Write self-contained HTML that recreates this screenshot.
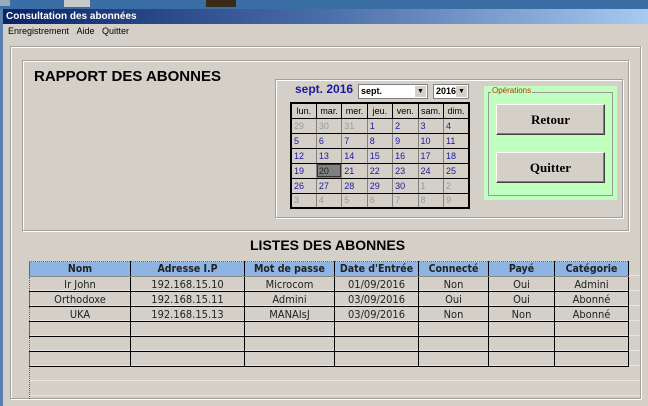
<!DOCTYPE html>
<html><head><meta charset="utf-8"><style>
*{margin:0;padding:0;box-sizing:border-box}
body{width:648px;height:406px;overflow:hidden;background:#d4d0c8;position:relative;font-family:"Liberation Sans",sans-serif}
.a{position:absolute}
.frame{position:absolute;border:1px solid #a0a0a0;box-shadow:inset 1px 1px 0 #fff,1px 1px 0 #fff}
table{border-collapse:collapse;position:absolute}
.cal td{border:1px solid #000;width:25.7px;height:15px;font-size:9px;padding-left:2px;color:#1a1aa0;background:#d4d0c8;border-right-color:#808080;border-bottom-color:#000}
.cal th{border:1px solid #000;height:15px;font-size:9px;font-weight:normal;color:#000;text-align:center}
.cal td.g{color:#999}
.btn{position:absolute;width:109px;height:31px;background:#d4d0c8;border:1px solid;border-color:#fff #404040 #404040 #fff;box-shadow:inset -1px -1px 0 #808080;font-family:"Liberation Serif",serif;font-weight:bold;font-size:13px;text-align:center;line-height:29px}
.t td,.t th{height:15px;font-size:11px;text-align:center;border-right:1px solid #000;border-bottom:1px solid #000;color:#222;font-family:"DejaVu Sans Condensed","Liberation Sans",sans-serif}
.t th{background:#8db4e2;font-weight:bold;border-bottom:1px solid #888;font-size:10.5px}
</style></head><body>
<div class="a" style="left:0;top:0;width:648px;height:9px;background:#3a6ea5"></div>
<div class="a" style="left:0;top:0;width:10px;height:6px;background:#9ab"></div>
<div class="a" style="left:64px;top:0;width:26px;height:7px;background:#c9c9c9"></div>
<div class="a" style="left:206px;top:0;width:30px;height:7px;background:#3a2a1a"></div>
<div class="a" style="left:0;top:9px;width:3px;height:397px;background:#5a80b0"></div>
<div class="a" style="left:3px;top:9px;width:645px;height:15px;background:linear-gradient(90deg,#0a246a,#4a6ea8 50%,#a6caf0);color:#fff;font-size:10px;font-weight:bold;line-height:15px;padding-left:3px">Consultation des abonnées</div>
<div class="a" style="left:8px;top:26px;font-size:9px;color:#000">Enregistrement&nbsp;&nbsp;&nbsp;Aide&nbsp;&nbsp;&nbsp;Quitter</div>
<div class="frame" style="left:10px;top:46px;width:631px;height:353px"></div>
<div class="frame" style="left:22px;top:60px;width:607px;height:171px"></div>
<div class="a" style="left:34px;top:68px;font-size:15px;font-weight:bold;color:#000">RAPPORT DES ABONNES</div>
<div class="frame" style="left:275px;top:79px;width:348px;height:139px"></div>
<div class="a" style="left:295px;top:82px;font-size:12px;font-weight:bold;color:#1a1aa0">sept. 2016</div>
<div class="a" style="left:358px;top:84px;width:70px;height:15px;background:#fff;border:1px solid #808080;font-size:9px;font-weight:bold;padding:1px 2px">sept.<span class="a" style="right:1px;top:1px;width:11px;height:11px;background:#d4d0c8;font-size:7px;text-align:center;line-height:11px">▼</span></div>
<div class="a" style="left:433px;top:84px;width:36px;height:15px;background:#fff;border:1px solid #808080;font-size:9px;font-weight:bold;padding:1px 2px">2016<span class="a" style="right:1px;top:1px;width:11px;height:11px;background:#d4d0c8;font-size:7px;text-align:center;line-height:11px">▼</span></div>
<table class="cal" style="left:290px;top:102px;width:180px;border:2px solid #000">
<tr><th>lun.</th><th>mar.</th><th>mer.</th><th>jeu.</th><th>ven.</th><th>sam.</th><th>dim.</th></tr>
<tr><td class="g">29</td><td class="g">30</td><td class="g">31</td><td>1</td><td>2</td><td>3</td><td>4</td></tr>
<tr><td>5</td><td>6</td><td>7</td><td>8</td><td>9</td><td>10</td><td>11</td></tr>
<tr><td>12</td><td>13</td><td>14</td><td>15</td><td>16</td><td>17</td><td>18</td></tr>
<tr><td>19</td><td style="background:#808080;color:#222;outline:1px solid #333;outline-offset:-2px">20</td><td>21</td><td>22</td><td>23</td><td>24</td><td>25</td></tr>
<tr><td>26</td><td>27</td><td>28</td><td>29</td><td>30</td><td class="g">1</td><td class="g">2</td></tr>
<tr><td class="g">3</td><td class="g">4</td><td class="g">5</td><td class="g">6</td><td class="g">7</td><td class="g">8</td><td class="g">9</td></tr>
</table>
<div class="a" style="left:484px;top:86px;width:133px;height:114px;background:#c0ffc0"></div>
<div class="a" style="left:488px;top:92px;width:125px;height:104px;border:1px solid #999"></div>
<div class="a" style="left:491px;top:86px;font-size:8px;color:#c03000;background:#c0ffc0;padding:0 1px">Opérations</div>
<div class="btn" style="left:496px;top:104px">Retour</div>
<div class="btn" style="left:496px;top:152px">Quitter</div>
<div class="a" style="left:250px;top:237px;font-size:14px;font-weight:bold;color:#000">LISTES DES ABONNES</div>
<div class="a" style="left:29px;top:261px;width:611px;height:138px;border-left:1px dotted #666;background:repeating-linear-gradient(180deg,transparent 0 14px,#e6e6e6 14px 15px)"></div>
<table class="t" style="left:29px;top:261px;width:600px;border-top:1px dotted #666;border-left:1px dotted #666">
<tr><th style="width:101px">Nom</th><th style="width:114px">Adresse I.P</th><th style="width:90px">Mot de passe</th><th style="width:84px">Date d'Entrée</th><th style="width:70px">Connecté</th><th style="width:66px">Payé</th><th>Catégorie</th></tr>
<tr><td>Ir John</td><td>192.168.15.10</td><td>Microcom</td><td>01/09/2016</td><td>Non</td><td>Oui</td><td>Admini</td></tr>
<tr><td>Orthodoxe</td><td>192.168.15.11</td><td>Admini</td><td>03/09/2016</td><td>Oui</td><td>Oui</td><td>Abonné</td></tr>
<tr><td>UKA</td><td>192.168.15.13</td><td>MANAIsJ</td><td>03/09/2016</td><td>Non</td><td>Non</td><td>Abonné</td></tr>
<tr><td></td><td></td><td></td><td></td><td></td><td></td><td></td></tr>
<tr><td></td><td></td><td></td><td></td><td></td><td></td><td></td></tr>
<tr><td></td><td></td><td></td><td></td><td></td><td></td><td></td></tr>
</table>
</body></html>
